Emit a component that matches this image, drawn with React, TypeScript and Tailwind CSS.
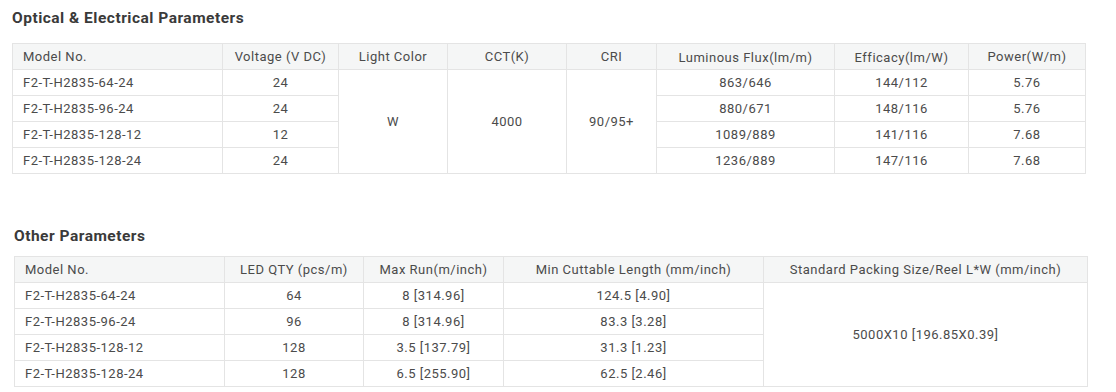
const font = { fontFamily: "Roboto, 'Liberation Sans', sans-serif" };

const optical = [
  ["F2-T-H2835-64-24", "24", "863/646", "144/112", "5.76"],
  ["F2-T-H2835-96-24", "24", "880/671", "148/116", "5.76"],
  ["F2-T-H2835-128-12", "12", "1089/889", "141/116", "7.68"],
  ["F2-T-H2835-128-24", "24", "1236/889", "147/116", "7.68"],
];

const other = [
  ["F2-T-H2835-64-24", "64", "8 [314.96]", "124.5 [4.90]"],
  ["F2-T-H2835-96-24", "96", "8 [314.96]", "83.3 [3.28]"],
  ["F2-T-H2835-128-12", "128", "3.5 [137.79]", "31.3 [1.23]"],
  ["F2-T-H2835-128-24", "128", "6.5 [255.90]", "62.5 [2.46]"],
];

const th = "border border-[#e4e4e4] bg-[#f5f6f6] font-normal h-[26px] p-0 text-center";
const td = "border border-[#e4e4e4] h-[26px] p-0 text-center";
const tdLeft = "border border-[#e4e4e4] h-[26px] p-0 pl-[10px] text-left";

export default function App() {
  return (
    <div className="w-[1116px] h-[392px] bg-white text-[#4b4b4b] text-[13px] tracking-[0.5px]" style={font}>
      <div className="pl-[12px] pt-[8px]">
        <h2 className="text-[15.5px] font-bold text-[#3a3a3a] leading-[20px] tracking-[0.5px]">
          Optical &amp; Electrical Parameters
        </h2>
        <table className="mt-[15px] border-collapse table-fixed w-[1073px]">
          <colgroup>
            <col className="w-[210px]" />
            <col className="w-[116px]" />
            <col className="w-[109px]" />
            <col className="w-[119px]" />
            <col className="w-[90px]" />
            <col className="w-[178px]" />
            <col className="w-[134px]" />
            <col className="w-[117px]" />
          </colgroup>
          <thead>
            <tr>
              <th className={th + " text-left pl-[10px]"}>Model No.</th>
              <th className={th}>Voltage (V DC)</th>
              <th className={th}>Light Color</th>
              <th className={th}>CCT(K)</th>
              <th className={th}>CRI</th>
              <th className={th + " pt-[3px]"}>Luminous Flux(lm/m)</th>
              <th className={th + " pt-[3px]"}>Efficacy(lm/W)</th>
              <th className={th}>Power(W/m)</th>
            </tr>
          </thead>
          <tbody>
            {optical.map((r, i) => (
              <tr key={r[0]}>
                <td className={tdLeft}>{r[0]}</td>
                <td className={td}>{r[1]}</td>
                {i === 0 && (
                  <>
                    <td rowSpan={4} className={td}>W</td>
                    <td rowSpan={4} className={td}>4000</td>
                    <td rowSpan={4} className={td}>90/95+</td>
                  </>
                )}
                <td className={td}>{r[2]}</td>
                <td className={td}>{r[3]}</td>
                <td className={td}>{r[4]}</td>
              </tr>
            ))}
          </tbody>
        </table>
      </div>

      <div className="pl-[14px] pt-[52px]">
        <h2 className="text-[15.5px] font-bold text-[#3a3a3a] leading-[20px] tracking-[0.5px]">
          Other Parameters
        </h2>
        <table className="mt-[10px] border-collapse table-fixed w-[1073px]">
          <colgroup>
            <col className="w-[210px]" />
            <col className="w-[139px]" />
            <col className="w-[140px]" />
            <col className="w-[260px]" />
            <col className="w-[324px]" />
          </colgroup>
          <thead>
            <tr>
              <th className={th + " text-left pl-[10px]"}>Model No.</th>
              <th className={th}>LED QTY (pcs/m)</th>
              <th className={th}>Max Run(m/inch)</th>
              <th className={th}>Min Cuttable Length (mm/inch)</th>
              <th className={th}>Standard Packing Size/Reel L*W (mm/inch)</th>
            </tr>
          </thead>
          <tbody>
            {other.map((r, i) => (
              <tr key={r[0]}>
                <td className={tdLeft}>{r[0]}</td>
                <td className={td}>{r[1]}</td>
                <td className={td}>{r[2]}</td>
                <td className={td}>{r[3]}</td>
                {i === 0 && (
                  <td rowSpan={4} className={td}>5000X10 [196.85X0.39]</td>
                )}
              </tr>
            ))}
          </tbody>
        </table>
      </div>
    </div>
  );
}
